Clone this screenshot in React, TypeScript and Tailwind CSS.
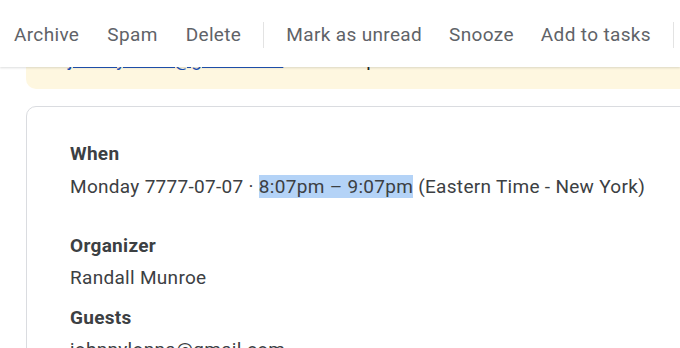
export default function App() {
  const actions = ["Archive", "Spam", "Delete"];
  const more = ["Mark as unread", "Snooze", "Add to tasks"];

  return (
    <div className="relative h-[348px] w-[680px] overflow-hidden bg-white font-['Roboto',sans-serif]">
      <div className="absolute inset-x-0 top-0 z-10 flex h-[67px] items-center bg-white pl-[14px] pt-[3px] text-[19px] tracking-[0.35px] text-[#5f6368] shadow-[0_1px_2px_rgba(60,64,67,0.18)]">
        <div className="flex gap-[28px]">
          {actions.map((a) => (
            <span key={a}>{a}</span>
          ))}
        </div>
        <div className="mx-[22px] h-[26px] w-px bg-[#e3e3e3]" />
        <div className="flex gap-[27px]">
          {more.map((a) => (
            <span key={a}>{a}</span>
          ))}
        </div>
        <div className="ml-[22px] h-[26px] w-px bg-[#e3e3e3]" />
      </div>

      <div className="ml-[26px] whitespace-nowrap rounded-bl-[10px] bg-[#fef7e0] pb-[17px] pl-[42px] pt-[48px] text-[19px] leading-[24px] tracking-[0.3px] text-[#202124]">
        <span className="text-[#1a4fb5] underline">johnnylonna@gmail.com</span> has accepted this invitation.
      </div>

      <div className="ml-[26px] mt-[17px] w-[700px] rounded-[10px] border border-[#dadce0] pb-8 pl-[43px] pt-[31px] text-[19px] leading-[32px] tracking-[0.3px] text-[#3c4043]">
        <div className="font-bold">When</div>
        <div className="mt-px whitespace-nowrap">
          Monday 7777-07-07 · <span className="bg-[#b4d3f7]">8:07pm – 9:07pm</span> (Eastern Time - New York)
        </div>
        <div className="mt-[27px] font-bold">Organizer</div>
        <div>Randall Munroe</div>
        <div className="mt-[8px] font-bold">Guests</div>
        <div>johnnylonna@gmail.com</div>
      </div>
    </div>
  );
}
